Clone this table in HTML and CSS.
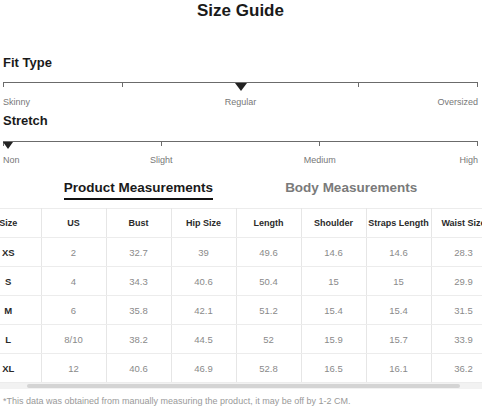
FILE: index.html
```html
<!DOCTYPE html>
<html>
<head>
<meta charset="utf-8">
<link rel="stylesheet" href="styles.css">
</head>
<body>
<div class="page">
  <h1 class="title">Size Guide</h1>

  <section class="meter">
    <h2 class="meter-title">Fit Type</h2>
    <div class="scale">
      <div class="seg" style="flex: 25"></div>
      <div class="seg" style="flex: 50"></div>
      <div class="seg seg-last" style="flex: 25"></div>
      <span class="marker" style="left: 50%"></span>
    </div>
    <div class="labels labels-3">
      <span class="l-left">Skinny</span>
      <span class="l-center">Regular</span>
      <span class="l-right">Oversized</span>
    </div>
  </section>

  <section class="meter meter-stretch">
    <h2 class="meter-title">Stretch</h2>
    <div class="scale">
      <div class="seg" style="flex: 1"></div>
      <div class="seg" style="flex: 1"></div>
      <div class="seg seg-last" style="flex: 1"></div>
      <span class="marker marker-start"></span>
    </div>
    <div class="labels labels-6">
      <span class="l-left">Non</span>
      <span class="l-center span2">Slight</span>
      <span class="l-center span2">Medium</span>
      <span class="l-right">High</span>
    </div>
  </section>

  <nav class="tabs">
    <span class="tab tab-active">Product Measurements</span>
    <span class="tab">Body Measurements</span>
  </nav>

  <div class="table-wrap">
    <table class="sizes">
      <thead>
        <tr><th>Size</th><th>US</th><th>Bust</th><th>Hip Size</th><th>Length</th><th>Shoulder</th><th>Straps Length</th><th>Waist Size</th></tr>
      </thead>
      <tbody>
        <tr><td class="sz">XS</td><td>2</td><td>32.7</td><td>39</td><td>49.6</td><td>14.6</td><td>14.6</td><td>28.3</td></tr>
        <tr><td class="sz">S</td><td>4</td><td>34.3</td><td>40.6</td><td>50.4</td><td>15</td><td>15</td><td>29.9</td></tr>
        <tr><td class="sz">M</td><td>6</td><td>35.8</td><td>42.1</td><td>51.2</td><td>15.4</td><td>15.4</td><td>31.5</td></tr>
        <tr><td class="sz">L</td><td>8/10</td><td>38.2</td><td>44.5</td><td>52</td><td>15.9</td><td>15.7</td><td>33.9</td></tr>
        <tr><td class="sz">XL</td><td>12</td><td>40.6</td><td>46.9</td><td>52.8</td><td>16.5</td><td>16.1</td><td>36.2</td></tr>
      </tbody>
    </table>
  </div>
  <div class="scrollbar"><div class="thumb"></div></div>

  <p class="note">*This data was obtained from manually measuring the product, it may be off by 1-2 CM.</p>
</div>
</body>
</html>
```

FILE: styles.css
```css
* { box-sizing: border-box; }
html, body { margin: 0; padding: 0; background: #fff; }
body {
  font-family: "Liberation Sans", Arial, sans-serif;
  color: #222;
  width: 482px;
  height: 410px;
  overflow: hidden;
}
.page { padding: 0 4px 0 3px; }

.title {
  margin: 1px 0 0;
  font-size: 17px;
  line-height: 20px;
  font-weight: bold;
  text-align: center;
  color: #1a1a1a;
}

.meter { margin-top: 34px; }
.meter-stretch { margin-top: 5px; }
.meter-title {
  margin: 0;
  font-size: 13px;
  line-height: 16px;
  font-weight: bold;
  color: #1a1a1a;
}
.scale {
  position: relative;
  display: flex;
  margin-top: 11px;
  height: 5px;
}
.meter-stretch .scale { margin-top: 12px; }
.seg {
  border-top: 1px solid #6b6b6b;
  border-left: 1px solid #6b6b6b;
  height: 5px;
}
.seg-last { border-right: 1px solid #6b6b6b; }
.marker {
  position: absolute;
  top: 1px;
  width: 0;
  height: 0;
  margin-left: -6px;
  border-left: 6px solid transparent;
  border-right: 6px solid transparent;
  border-top: 8px solid #222;
}
.marker-start { left: 0; margin-left: 0; border-left-width: 5px; border-right-width: 5px; border-top-width: 7px; }

.labels {
  display: grid;
  margin-top: 10px;
  font-size: 9px;
  line-height: 11px;
  color: #777;
}
.labels-3 { grid-template-columns: 1fr 1fr 1fr; }
.labels-6 { grid-template-columns: repeat(6, 1fr); margin-top: 9px; }
.l-left { text-align: left; }
.l-center { text-align: center; }
.l-right { text-align: right; }
.span2 { grid-column: span 2; }

.tabs {
  display: flex;
  justify-content: center;
  gap: 72px;
  margin-top: 14px;
  padding-left: 0;
}
.tab {
  font-size: 13.5px;
  line-height: 16px;
  font-weight: bold;
  color: #7a7a7a;
  padding-bottom: 2px;
  border-bottom: 2px solid transparent;
}
.tab-active {
  color: #1a1a1a;
  border-bottom-color: #111;
}

.table-wrap {
  margin: 8px -4px 0 -3px;
  overflow: hidden;
  width: 482px;
}
.sizes {
  border-collapse: collapse;
  table-layout: fixed;
  width: 520px;
  margin-left: -24px;
  font-size: 9.5px;
}
.sizes th, .sizes td {
  width: 65px;
  height: 29px;
  padding: 0;
  text-align: center;
  border-top: 1px solid #ececec;
  border-bottom: 1px solid #ececec;
  border-right: 1px solid #e6e6e6;
  white-space: nowrap;
}
.sizes th {
  font-size: 9px;
  font-weight: bold;
  color: #2a2a2a;
}
.sizes td { color: #8a8a8a; }
.sizes td.sz { font-weight: bold; color: #2a2a2a; }

.scrollbar {
  margin: 0 -4px 0 -3px;
  height: 6px;
  background: #f2f2f2;
  padding: 1px 0;
}
.thumb {
  margin-left: 27px;
  width: 433px;
  height: 4px;
  border-radius: 3px;
  background: #d4d4d4;
}

.note {
  margin: 7px 0 0;
  font-size: 9px;
  line-height: 11px;
  color: #999;
}
```
